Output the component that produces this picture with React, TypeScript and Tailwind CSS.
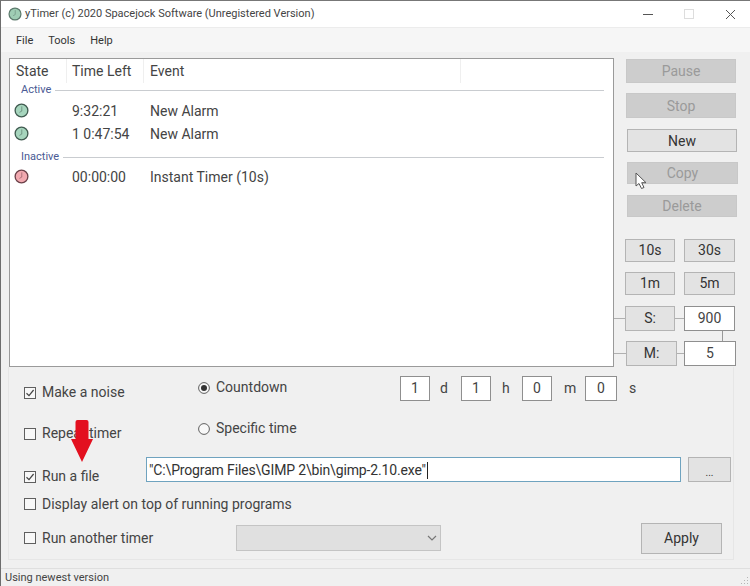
const font = { fontFamily: 'Roboto, "Noto Sans", sans-serif' };

function Clock({ color = "#a6d5bd", size = 15, ring = "#3f5a4f" }: { color?: string; size?: number; ring?: string }) {
  return (
    <svg width={size} height={size} viewBox="0 0 16 16" className="shrink-0">
      <circle cx="8" cy="8" r="6.8" fill={color} stroke={ring} strokeWidth="1.4" />
      <path d="M8.3 3.6V8.6L5.8 10" fill="none" stroke={ring} strokeWidth="0.9" opacity="0.6" />
    </svg>
  );
}

function Btn({ label, disabled, className }: { label: string; disabled?: boolean; className: string }) {
  return (
    <div
      className={`shrink-0 flex items-center justify-center border text-[14px] ${
        disabled ? "bg-[#cdcdcd] border-[#c8c8c8] text-[#9a9a9a]" : "bg-[#e3e3e3] border-[#b4b4b4] text-[#333333]"
      } ${className}`}
    >
      {label === "..." ? <span className="text-[10px] mt-[6px]">...</span> : label}
    </div>
  );
}

function Box({ value, className }: { value: string; className: string }) {
  return (
    <div className={`shrink-0 flex items-center justify-center bg-white border border-[#8f8f8f] text-[14px] text-[#444444] ${className}`}>
      {value}
    </div>
  );
}

function Check({ label, checked, className = "" }: { label: string; checked?: boolean; className?: string }) {
  return (
    <div className={`flex items-center gap-[6px] text-[14px] text-[#444444] ${className}`}>
      <svg width="12" height="12" viewBox="0 0 12 12" className="shrink-0">
        <rect x="0.5" y="0.5" width="11" height="11" fill="#f8f8f8" stroke="#5f5f5f" />
        {checked && <path d="M2.5 6.2L5 8.6L9.6 3" fill="none" stroke="#444444" strokeWidth="1.2" />}
      </svg>
      <span className="whitespace-nowrap">{label}</span>
    </div>
  );
}

function Radio({ label, checked, className = "" }: { label: string; checked?: boolean; className?: string }) {
  return (
    <div className={`flex items-center gap-[6px] text-[14px] text-[#444444] ${className}`}>
      <svg width="12" height="12" viewBox="0 0 12 12" className="shrink-0">
        <circle cx="6" cy="6" r="5.4" fill="#f8f8f8" stroke="#5f5f5f" />
        {checked && <circle cx="6" cy="6" r="3" fill="#333333" />}
      </svg>
      <span className="whitespace-nowrap">{label}</span>
    </div>
  );
}

function Group({ label, className = "" }: { label: string; className?: string }) {
  return (
    <div className={`flex items-center h-[16px] pl-[11px] pr-[9px] ${className}`}>
      <span className="text-[11px] text-[#4a5a94] whitespace-nowrap">{label}</span>
      <div className="flex-1 h-px bg-[#c9ccd0] ml-[4px]" />
    </div>
  );
}

function Row({ time, event, color, ring }: { time: string; event: string; color: string; ring: string }) {
  return (
    <div className="flex items-center h-[23px] text-[14px] text-[#444444]">
      <div className="w-[62px] pl-[4px] -mt-[3px]">
        <Clock color={color} ring={ring} />
      </div>
      <div className="w-[78px] whitespace-nowrap">{time}</div>
      <div className="whitespace-nowrap">{event}</div>
    </div>
  );
}

function Unit({ value, unit, box, gap, width }: { value: string; unit: string; box: string; gap: string; width: string }) {
  return (
    <div className={`flex items-center ${gap} ${width}`}>
      <Box value={value} className={`h-[25px] ${box}`} />
      <span className="text-[14px] text-[#444444]">{unit}</span>
    </div>
  );
}

export default function App() {
  return (
    <div style={font} className="relative w-[750px] h-[586px] overflow-hidden flex flex-col bg-[#f0f0f0] border-l border-t border-l-[#6d6d6d] border-t-[#777777]">
      {/* title bar */}
      <div className="h-[27px] shrink-0 bg-white flex items-center pl-[7px] border-b border-[#ececec]">
        <Clock size={14} color="#9fcdb4" ring="#5c7a6c" />
        <span className="ml-[3px] text-[11px] text-[#444444] whitespace-nowrap">yTimer (c) 2020 Spacejock Software (Unregistered Version)</span>
        <div className="ml-auto flex items-center pr-[14px] gap-[31px]">
          <div className="w-[10px] h-px bg-[#555555]" />
          <div className="w-[10px] h-[10px] border border-[#dddddd]" />
          <svg width="11" height="11" viewBox="0 0 11 11">
            <path d="M1 1L10 10M10 1L1 10" stroke="#555555" strokeWidth="1" />
          </svg>
        </div>
      </div>

      {/* menu */}
      <div className="h-[24px] shrink-0 bg-[#f6f6f6] flex items-center gap-[15px] pl-[15px] pt-[2px] text-[11px] text-[#333333]">
        <span>File</span>
        <span>Tools</span>
        <span>Help</span>
      </div>

      {/* list and side buttons */}
      <div className="flex h-[315px] pt-[6px] pl-[8px] shrink-0">
        <div className="w-[605px] h-[309px] bg-white border border-[#9a9a9a] shrink-0">
          <div className="flex items-center h-[24px] text-[14px] text-[#444444]">
            <div className="w-[57px] pl-[6px] h-full flex items-center border-r border-[#efefef]">State</div>
            <div className="w-[77px] pl-[5px] h-full flex items-center border-r border-[#efefef]">Time Left</div>
            <div className="w-[317px] pl-[6px] h-full flex items-center border-r border-[#efefef]">Event</div>
          </div>
          <Group label="Active" className="-mt-px" />
          <div className="h-[2px]" />
          <Row time="9:32:21" event="New Alarm" color="#a6d5bd" ring="#3f5a4f" />
          <Row time="1 0:47:54" event="New Alarm" color="#a6d5bd" ring="#3f5a4f" />
          <div className="h-[3px]" />
          <Group label="Inactive" />
          <div className="h-[1px]" />
          <Row time="00:00:00" event="Instant Timer (10s)" color="#f2a9b0" ring="#6a4048" />
        </div>

        <div className="flex flex-col shrink-0 w-[123px]">
          <Btn disabled label="Pause" className="ml-[12px] w-[110px] h-[24px] mt-px" />
          <Btn disabled label="Stop" className="ml-[12px] w-[110px] h-[25px] mt-[10px] pt-[2px]" />
          <Btn label="New" className="ml-[13px] w-[110px] h-[23px] mt-[11px] pt-[1px]" />
          <Btn disabled label="Copy" className="ml-[13px] w-[111px] h-[22px] mt-[10px]" />
          <Btn disabled label="Delete" className="ml-[13px] w-[110px] h-[22px] mt-[11px]" />
          <div className="flex gap-[9px] ml-[11px] mt-[22px]">
            <Btn label="10s" className="w-[50px] h-[23px]" />
            <Btn label="30s" className="w-[51px] h-[23px]" />
          </div>
          <div className="flex gap-[9px] ml-[11px] mt-[10px]">
            <Btn label="1m" className="w-[50px] h-[23px]" />
            <Btn label="5m" className="w-[51px] h-[23px]" />
          </div>
          <div className="flex items-center mt-[11px] shrink-0">
            <div className="w-[11px] h-px bg-[#b0b0b0]" />
            <Btn label="S:" className="w-[50px] h-[25px]" />
            <div className="w-[9px] h-px bg-[#b0b0b0]" />
            <Box value="900" className="w-[51px] h-[25px]" />
          </div>
          <div className="w-px h-[10px] shrink-0 bg-[#999999] ml-[108px]" />
          <div className="flex items-center shrink-0">
            <div className="w-[12px] h-px bg-[#b0b0b0]" />
            <Btn label="M:" className="w-[51px] h-[25px]" />
            <div className="w-[7px] h-px bg-[#b0b0b0]" />
            <Box value="5" className="w-[52px] h-[25px]" />
          </div>
        </div>
      </div>

      {/* options */}
      <div className="flex-1 flex flex-col ml-[7px] mr-[16px] mb-[8px] pl-[15px] border-l border-r border-b border-[#e6e6e6]">
        <div className="flex items-start h-[46px] pt-[9px]">
          <Check checked label="Make a noise" className="w-[174px] mt-[6px]" />
          <Radio checked label="Countdown" className="w-[202px] mt-[1px]" />
          <div className="flex items-center">
            <Unit value="1" unit="d" box="w-[30px]" gap="gap-[10px]" width="w-[61px]" />
            <Unit value="1" unit="h" box="w-[30px]" gap="gap-[11px]" width="w-[61px]" />
            <Unit value="0" unit="m" box="w-[30px]" gap="gap-[12px]" width="w-[63px]" />
            <Unit value="0" unit="s" box="w-[32px]" gap="gap-[12px]" width="w-[60px]" />
          </div>
        </div>
        <div className="flex items-start h-[43px]">
          <Check label="Repeat timer" className="w-[174px] mt-[10px]" />
          <Radio label="Specific time" className="mt-[5px]" />
        </div>
        <div className="flex items-start h-[35px] pt-[1px]">
          <Check checked label="Run a file" className="w-[122px] mt-[9px]" />
          <div className="w-[535px] h-[25px] bg-white border border-[#6fa3bf] flex items-center pl-[2px] pt-[1px] text-[14px] tracking-[-0.15px] text-[#333333] whitespace-nowrap">
            "C:\Program Files\GIMP 2\bin\gimp-2.10.exe"
            <span className="w-px h-[17px] bg-[#222222] ml-px" />
          </div>
          <Btn label="..." className="ml-[7px] w-[43px] h-[25px]" />
        </div>
        <Check label="Display alert on top of running programs" className="h-[26px]" />
        <div className="flex items-center h-[42px]">
          <Check label="Run another timer" className="w-[212px]" />
          <div className="w-[205px] h-[26px] bg-[#e0e0e0] border border-[#c4c4c4] flex items-center justify-end pr-[3px]">
            <svg width="10" height="6" viewBox="0 0 10 6">
              <path d="M1 1L5 5L9 1" fill="none" stroke="#777777" strokeWidth="1.2" />
            </svg>
          </div>
          <Btn label="Apply" className="ml-auto mr-[11px] w-[81px] h-[31px]" />
        </div>
      </div>

      {/* status bar */}
      <div className="h-[18px] shrink-0 border-t border-[#dfdfdf] flex items-center pl-[4px] pt-[1px] text-[11px] text-[#444444]">
        <span className="whitespace-nowrap">Using newest version</span>
        <svg width="10" height="10" viewBox="0 0 10 10" className="ml-auto mr-[1px] mt-[4px]">
          <path d="M8 2h1v1H8zM5 5h1v1H5zM8 5h1v1H8zM2 8h1v1H2zM5 8h1v1H5zM8 8h1v1H8z" fill="#b5b5b5" />
        </svg>
      </div>

      {/* red arrow overlay */}
      <svg width="24" height="44" viewBox="0 0 24 44" className="absolute left-[69px] top-[419px]">
        <path d="M5.5 2Q5.5 0 7.5 0H16.5Q18.5 0 18.5 2V19H23L12 42L1 19H5.5Z" fill="#e3101f" />
      </svg>
      {/* mouse pointer overlay */}
      <svg width="13" height="18" viewBox="0 0 13 18" className="absolute left-[634px] top-[171px]">
        <path d="M1 1V14L4 11.5L6.5 16.5L9 15.5L6.7 10.7H11Z" fill="#ffffff" stroke="#555555" strokeWidth="1" />
      </svg>
    </div>
  );
}
